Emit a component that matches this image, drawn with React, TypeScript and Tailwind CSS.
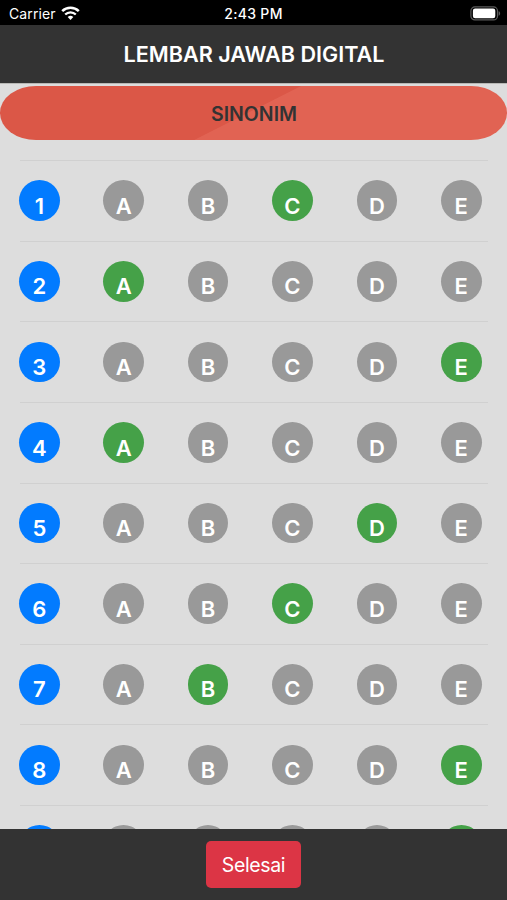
const LETTERS = ["A", "B", "C", "D", "E"];

const ANSWERS = ["C", "A", "E", "A", "D", "C", "B", "E", "E"];

function WifiIcon() {
  return (
    <svg width="19" height="15" viewBox="0 0 19 15" fill="none">
      <path d="M1.2 5.2a11.8 11.8 0 0 1 16.6 0" stroke="#fff" strokeWidth="2.5" />
      <path d="M4.2 8.5a7.5 7.5 0 0 1 10.6 0" stroke="#fff" strokeWidth="2.3" />
      <path d="M6.7 11.1a4 4 0 0 1 5.6 0L9.5 14z" fill="#fff" />
    </svg>
  );
}

function BatteryIcon() {
  return (
    <svg width="31" height="15" viewBox="0 0 31 15" fill="none">
      <rect x="0.9" y="0.9" width="26.6" height="13" rx="4" stroke="#5b5b5b" strokeWidth="1.2" />
      <rect x="2.9" y="2.6" width="22.4" height="9.7" rx="2.2" fill="#fff" />
      <path d="M28.6 5.2c2 .6 2 3.8 0 4.5z" fill="#5b5b5b" />
    </svg>
  );
}

function Bubble({ label, color }: { label: string; color: string }) {
  return (
    <div
      className={`flex h-[40.6px] w-[40.6px] items-center justify-center rounded-full pt-[10px] text-[22px] leading-none font-semibold text-white ${color}`}
    >
      {label}
    </div>
  );
}

function AnswerRow({ number, answer }: { number: number; answer: string }) {
  return (
    <div className="h-[80.65px] shrink-0 border-t border-[#d0d0d0] pt-[19.3px]">
      <div className="-ml-px flex w-[462.6px] justify-between">
        <Bubble label={String(number)} color="bg-[#027bff]" />
        {LETTERS.map((letter) => (
          <Bubble
            key={letter}
            label={letter}
            color={letter === answer ? "bg-[#45a148]" : "bg-[#999999]"}
          />
        ))}
      </div>
    </div>
  );
}

export default function App() {
  return (
    <div className="flex h-[900px] w-[507px] flex-col overflow-hidden bg-[#dddddd] font-['Inter','Liberation_Sans',sans-serif]">
      <div className="grid h-[25px] shrink-0 grid-cols-3 items-center bg-black pt-[2px] pr-[6px] pl-[9px] text-[14px] leading-none text-white">
        <div className="flex items-center gap-[5px]">
          <span className="tracking-[0.1px]">Carrier</span>
          <WifiIcon />
        </div>
        <span className="-ml-[3px] text-center font-medium tracking-[0.3px]">2:43 PM</span>
        <div className="flex justify-end">
          <BatteryIcon />
        </div>
      </div>

      <header className="flex h-[57.5px] shrink-0 items-center justify-center bg-[#333333] pt-[3px]">
        <h1 className="pl-px text-[21.6px] leading-none font-semibold text-white">LEMBAR JAWAB DIGITAL</h1>
      </header>

      <main className="flex min-h-0 flex-1 flex-col overflow-hidden border-t border-[#b8b8b5] pt-[2.8px]">
        <div className="flex h-[53.7px] shrink-0 items-center justify-center rounded-[36px/26.75px] bg-[linear-gradient(153.2deg,#db5747_48.9%,#e16353_49.2%)] pt-[3px] pl-px text-[19.5px] leading-none font-semibold text-[#333333]">
          SINONIM
        </div>
        <div className="mt-[20px] flex flex-col pr-[19px] pl-[20px]">
          {ANSWERS.map((answer, i) => (
            <AnswerRow key={i} number={i + 1} answer={answer} />
          ))}
        </div>
      </main>

      <footer className="flex h-[71.3px] shrink-0 items-start justify-center bg-[#333333] pt-[12.5px]">
        <button className="h-[46.5px] w-[95px] rounded-[5px] bg-[#dc3545] pt-[2px] text-[19.5px] leading-none tracking-[-0.35px] text-white">
          Selesai
        </button>
      </footer>
    </div>
  );
}
